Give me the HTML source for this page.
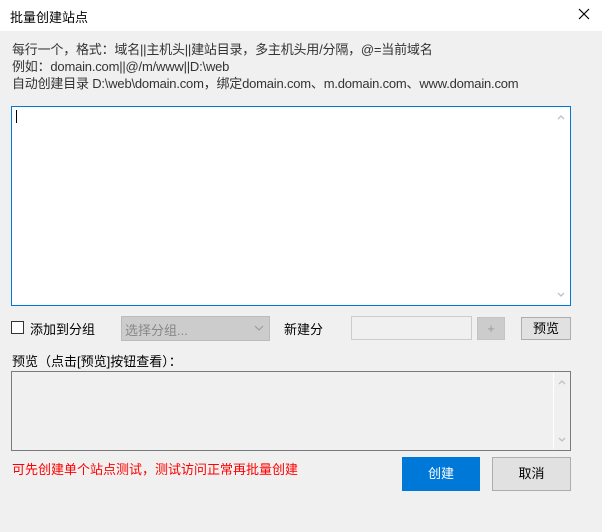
<!DOCTYPE html><html><head><meta charset="utf-8"><style>
*{margin:0;padding:0;box-sizing:border-box}
body{width:602px;height:532px;background:#f0f0f0;font-family:"Liberation Sans","Noto Sans CJK SC",sans-serif;font-size:13px;color:#000;position:relative;overflow:hidden}
.a{position:absolute}
.title{left:0;top:0;width:602px;height:31px;background:#fff}
.sb{position:absolute;right:1px;top:1px;bottom:1px;width:16px;background:#f0f0f0}
.up{position:absolute;left:4px;top:6px}
.dn{position:absolute;left:4px;bottom:6px}
</style></head><body>
<div class="a title"></div>
<div class="a" style="left:10px;top:7px;font-size:13px">批量创建站点</div>
<svg class="a" style="left:578px;top:8px" width="12" height="12"><path d="M1 1L11 11M11 1L1 11" stroke="#000" stroke-width="1.2"/></svg>
<div class="a" style="left:12px;top:41px;line-height:17px;color:#333;letter-spacing:-0.2px">每行一个，格式：域名||主机头||建站目录，多主机头用/分隔，@=当前域名<br>例如：domain.com||@/m/www||D:\web<br>自动创建目录 D:\web\domain.com，绑定domain.com、m.domain.com、www.domain.com</div>
<div class="a" style="left:11px;top:106px;width:560px;height:200px;background:#fff;border:1px solid #0078d7"><div class="sb" style="background:#fff"><svg class="up" width="8" height="6"><path d="M1 5L4 2L7 5" stroke="#c0c0c0" fill="none" stroke-width="1.3"/></svg><svg class="dn" width="8" height="6"><path d="M1 1L4 4L7 1" stroke="#c0c0c0" fill="none" stroke-width="1.3"/></svg></div></div>
<div class="a" style="left:16px;top:110px;width:1px;height:13px;background:#000"></div>
<div class="a" style="left:11px;top:321px;width:13px;height:13px;border:1px solid #333;background:#fff"></div>
<div class="a" style="left:30px;top:319px">添加到分组</div>
<div class="a" style="left:121px;top:316px;width:149px;height:25px;background:#ccc;border:1px solid #bbb;color:#888;padding:3px 3px">选择分组...<svg style="position:absolute;right:5px;top:8px" width="10" height="7"><path d="M1 1L5 5L9 1" stroke="#999" fill="none"/></svg></div>
<div class="a" style="left:284px;top:319px">新建分</div>
<div class="a" style="left:351px;top:316px;width:121px;height:24px;background:#f0f0f0;border:1px solid #ccc"></div>
<div class="a" style="left:477px;top:317px;width:28px;height:23px;background:#ccc;border:1px solid #c4c4c4;color:#999;text-align:center;line-height:21px">+</div>
<div class="a" style="left:521px;top:317px;width:50px;height:23px;background:#e1e1e1;border:1px solid #adadad;text-align:center;line-height:21px">预览</div>
<div class="a" style="left:12px;top:351px">预览（点击[预览]按钮查看）：</div>
<div class="a" style="left:11px;top:371px;width:560px;height:80px;border:1px solid #7a7a7a;background:#f0f0f0"><div class="sb" style="border-left:1px solid #fff"><svg class="up" width="8" height="6"><path d="M1 5L4 2L7 5" stroke="#c0c0c0" fill="none" stroke-width="1.3"/></svg><svg class="dn" width="8" height="6"><path d="M1 1L4 4L7 1" stroke="#c0c0c0" fill="none" stroke-width="1.3"/></svg></div></div>
<div class="a" style="left:12px;top:459px;color:#f00">可先创建单个站点测试，测试访问正常再批量创建</div>
<div class="a" style="left:402px;top:457px;width:78px;height:34px;background:#0078d7;color:#fff;text-align:center;line-height:34px">创建</div>
<div class="a" style="left:492px;top:457px;width:79px;height:34px;background:#e1e1e1;border:1px solid #adadad;text-align:center;line-height:32px">取消</div>
</body></html>
